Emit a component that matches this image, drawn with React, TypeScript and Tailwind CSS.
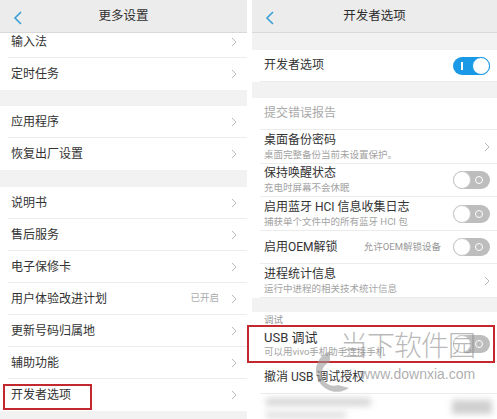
import React from "react"

function Back() {
  return (
    <svg width="10" height="14" viewBox="0 0 10 14" className="absolute left-[13px] top-[11px]">
      <path d="M8 1 L2 7 L8 13" fill="none" stroke="#3a9fd5" strokeWidth="1.6" />
    </svg>
  )
}

function Chevron() {
  return (
    <svg width="6" height="10" viewBox="0 0 6 10">
      <path d="M1 1 L5 5 L1 9" fill="none" stroke="#b9b9b9" strokeWidth="1" />
    </svg>
  )
}

function Header({ title }: { title: string }) {
  return (
    <div className="relative z-10 h-[33px] shrink-0 bg-[#ececec] border-b border-[#d9d9d9] flex items-center justify-center">
      <Back />
      <span className="text-[12.5px] text-[#2e2e2e]">{title}</span>
    </div>
  )
}

function Toggle({ on }: { on?: boolean }) {
  if (on) {
    return (
      <div className="relative w-[37px] h-[18px] rounded-full bg-[#1a9ae6]">
        <div className="absolute left-[8px] top-[5px] w-[1.5px] h-[8px] bg-white" />
        <div className="absolute right-0 top-0 w-[18px] h-[18px] rounded-full bg-white border border-[#1a9ae6]" />
      </div>
    )
  }
  return (
    <div className="relative w-[37px] h-[18px] rounded-full bg-[#bdbdbd]">
      <div className="absolute right-[7px] top-[5px] w-[8px] h-[8px] rounded-full border-[1.5px] border-white" />
      <div className="absolute left-0 top-0 w-[18px] h-[18px] rounded-full bg-white border border-[#c9c9c9]" />
    </div>
  )
}

function LeftRow({ label, extra, last, cls }: { label: string; extra?: string; last?: boolean; cls?: string }) {
  return (
    <div className={`bg-white pl-[8px] ${cls ?? ""}`}>
      <div className={`h-[32px] flex items-center pl-[3px] pr-[10px] ${last ? "" : "border-b border-[#ececec]"}`}>
        <span className="flex-1 text-[12px] text-[#333]">{label}</span>
        {extra && <span className="text-[9.5px] text-[#aaa] mr-[12px]">{extra}</span>}
        <Chevron />
      </div>
    </div>
  )
}

function Gap({ h }: { h: string }) {
  return <div className={`bg-[#f2f2f2] ${h}`} />
}

function RightRow({
  title,
  sub,
  right,
  h = "h-[34px]",
  muted,
  side,
  big,
}: {
  title: string
  sub?: string
  right?: React.ReactNode
  h?: string
  muted?: boolean
  side?: string
  big?: boolean
}) {
  return (
    <div className="bg-white pl-[8px]">
      <div className={`${h} flex items-center pl-[4px] pr-[7px] border-b border-[#ececec]`}>
        <div className="flex-1 flex flex-col">
          <span
            className={`${big ? "text-[13px]" : "text-[12px]"} leading-[15px] ${muted ? "text-[#aaa]" : "text-[#333]"}`}
          >
            {title}
          </span>
          {sub && <span className="text-[9.5px] leading-[13px] text-[#a3a3a3]">{sub}</span>}
        </div>
        {side && <span className="text-[9.5px] text-[#999] mr-[12px]">{side}</span>}
        {right}
      </div>
    </div>
  )
}

export default function App() {
  return (
    <div className="relative w-[497px] h-[419px] overflow-hidden bg-white flex font-['Roboto','Noto_Sans_CJK_SC',sans-serif]">
      {/* left screen */}
      <div className="w-[247px] h-full flex flex-col bg-[#f2f2f2]">
        <Header title="更多设置" />
        <div className="flex-1 overflow-hidden flex flex-col">
          <LeftRow label="输入法" cls="-mt-[7px]" />
          <LeftRow label="定时任务" last />
          <Gap h="h-[16px]" />
          <LeftRow label="应用程序" />
          <LeftRow label="恢复出厂设置" last />
          <Gap h="h-[17px]" />
          <LeftRow label="说明书" />
          <LeftRow label="售后服务" />
          <LeftRow label="电子保修卡" />
          <LeftRow label="用户体验改进计划" extra="已开启" />
          <LeftRow label="更新号码归属地" />
          <LeftRow label="辅助功能" />
          <div className="relative">
            <LeftRow label="开发者选项" last />
            <div className="absolute left-[3px] top-[5px] w-[89px] h-[26px] border-2 border-[#c3282f]" />
          </div>
        </div>
      </div>

      <div className="w-[5px] bg-white" />

      {/* right screen */}
      <div className="flex-1 h-full flex flex-col bg-[#f2f2f2]">
        <Header title="开发者选项" />
        <Gap h="h-[17px]" />
        <RightRow title="开发者选项" h="h-[32px]" right={<Toggle on />} />
        <Gap h="h-[16px]" />
        <RightRow title="提交错误报告" h="h-[32px]" muted />
        <RightRow title="桌面备份密码" sub="桌面完整备份当前未设置保护。" right={<Chevron />} />
        <RightRow title="保持唤醒状态" sub="充电时屏幕不会休眠" h="h-[33px]" right={<Toggle />} />
        <RightRow title="启用蓝牙 HCI 信息收集日志" sub="捕获单个文件中的所有蓝牙 HCI 包" right={<Toggle />} />
        <RightRow title="启用OEM解锁" side="允许OEM解锁设备" h="h-[33px]" right={<Toggle />} />
        <RightRow title="进程统计信息" sub="运行中进程的相关技术统计信息" right={<Chevron />} />
        <Gap h="h-[14px]" />
        <div className="bg-white h-[14px] pl-[12px] flex items-end">
          <span className="text-[9.5px] leading-[12px] text-[#999]">调试</span>
        </div>
        <div className="relative">
          <RightRow title="USB 调试" sub="可以用vivo手机助手连接手机" h="h-[36px]" big right={<Toggle />} />
          <div className="absolute -left-[5px] -top-[1px] w-[248px] h-[38px] border-2 border-[#c3282f]" />
        </div>
        <RightRow title="撤消 USB 调试授权" h="h-[32px]" />
        <div className="flex-1 bg-white relative">
          <div className="absolute left-[14px] top-[4px] w-[105px] h-[8px] bg-[#d6d6d6] blur-[3px]" />
          <div className="absolute left-[200px] top-[6px] w-[40px] h-[14px] bg-[#cfcfcf] blur-[3px]" />
          <div className="absolute left-[14px] top-[18px] w-[80px] h-[6px] bg-[#dcdcdc] blur-[3px]" />
        </div>
      </div>

      {/* watermark */}
      <div className="absolute left-[306px] top-[348px] pointer-events-none">
        <svg width="46" height="64" viewBox="0 0 46 64" className="opacity-60">
          <path d="M24 3 A21 21 0 1 0 43 40 L32 37 A11 11 0 1 1 24 14 Z" fill="#9a9a9a" />
        </svg>
      </div>
      <div className="absolute left-[340px] top-[327px] pointer-events-none flex flex-col items-start">
        <span className="text-[28px] leading-[40px] tracking-[-1px] text-[#8a8a8a]/60 font-light">当下软件园</span>
        <span className="ml-[20px] -mt-[2px] text-[14px] leading-[18px] text-[#8a8a8a]/70 font-['Liberation_Sans',sans-serif]">
          www.downxia.com
        </span>
      </div>
    </div>
  )
}
